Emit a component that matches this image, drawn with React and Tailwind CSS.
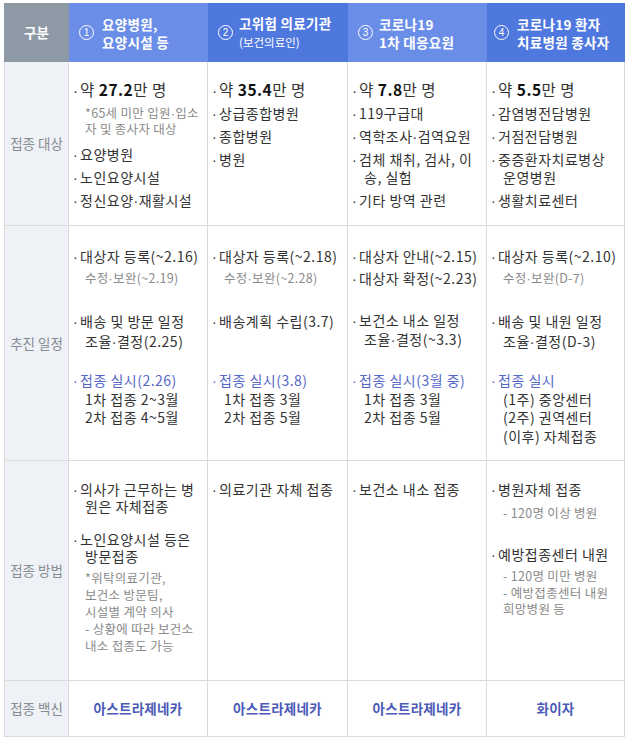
import React from 'react';

const line = 'border-r border-b border-[#dadada]';

// narrow middle dot (the CJK one is full width)
const D = () => <span className="font-['Liberation_Sans',sans-serif] leading-none">·</span>;

function Head({ n, bg, pad, gap, children }) {
  return (
    <div className={`flex items-center text-white ${bg} ${pad} ${gap}`}>
      <span className="flex h-[15px] w-[15px] shrink-0 items-center justify-center rounded-full border-[1.5px] border-white font-['Liberation_Sans',sans-serif] text-[10px] leading-none">
        {n}
      </span>
      <div className="whitespace-nowrap text-[13.5px] font-bold leading-[18px] tracking-[0.3px]">{children}</div>
    </div>
  );
}

function Label({ children }) {
  return (
    <div className={`flex items-center justify-center border-l bg-[#eef1f5] text-[13.5px] text-[#868c93] ${line}`}>
      {children}
    </div>
  );
}

function Item({ children, tone = 'text-[#333]', lead = 'leading-[18px]', className = '' }) {
  return (
    <p className={`whitespace-nowrap pl-[16px] indent-[-12px] text-[14px] tracking-[0.5px] ${tone} ${lead} ${className}`}>
      <span className="inline-block w-[7px] indent-0 font-['Liberation_Sans',sans-serif] leading-none">·</span>
      {children}
    </p>
  );
}

function Note({ children, lead = 'leading-[16px]', className = '' }) {
  return (
    <p className={`whitespace-nowrap pl-[16px] text-[12.5px] tracking-[0.3px] text-[#8a8a8a] ${lead} ${className}`}>
      {children}
    </p>
  );
}

function Big({ n }) {
  return (
    <Item lead="leading-[20px]" className="text-[15.5px]">
      약 <b className="font-bold text-[#111]">{n}</b>만 명
    </Item>
  );
}

function Plain({ children, lead = 'leading-[18.5px]' }) {
  return <p className={`whitespace-nowrap pl-[16px] text-[14px] tracking-[0.5px] text-[#333] ${lead}`}>{children}</p>;
}

const blue = 'text-[#5468c8]';

export default function App() {
  return (
    <div className="min-h-screen bg-white pl-[4px] pt-[3px] font-['Noto_Sans_CJK_KR','Noto_Sans',sans-serif] text-[13px] text-[#333]">
      <div className="grid w-[621px] grid-cols-[65px_139px_140px_139px_138px] grid-rows-[59px_164px_235px_220px_56px]">
        {/* header */}
        <div className="flex items-center justify-center bg-[#8d9aa5] text-[13.5px] font-bold text-white">구분</div>
        <Head n="1" bg="bg-[#6a8ee8]" pad="pl-[10px]" gap="gap-[8px]">
          요양병원,
          <br />
          요양시설 등
        </Head>
        <Head n="2" bg="bg-[#4f78df]" pad="pl-[10px]" gap="gap-[6px]">
          고위험 의료기관
          <br />
          <span className="text-[11.5px] font-normal tracking-normal">(보건의료인)</span>
        </Head>
        <Head n="3" bg="bg-[#6a8ee8]" pad="pl-[10px]" gap="gap-[6px]">
          코로나19
          <br />
          1차 대응요원
        </Head>
        <Head n="4" bg="bg-[#4f78df]" pad="pl-[7px]" gap="gap-[8px]">
          코로나19 환자
          <br />
          치료병원 종사자
        </Head>

        {/* 접종 대상 */}
        <Label>접종 대상</Label>
        <div className={`pt-[17px] ${line}`}>
          <Big n="27.2" />
          <Note className="mt-[6px]">
            *65세 미만 입원<D />입소
            <br />자 및 종사자 대상
          </Note>
          <Item className="mt-[8px]">요양병원</Item>
          <Item className="mt-[5px]">노인요양시설</Item>
          <Item className="mt-[5px]">
            정신요양<D />재활시설
          </Item>
        </div>
        <div className={`pt-[17px] ${line}`}>
          <Big n="35.4" />
          <Item className="mt-[5px]">상급종합병원</Item>
          <Item className="mt-[5px]">종합병원</Item>
          <Item className="mt-[5px]">병원</Item>
        </div>
        <div className={`pt-[17px] ${line}`}>
          <Big n="7.8" />
          <Item className="mt-[5px]">119구급대</Item>
          <Item className="mt-[5px]">
            역학조사<D />검역요원
          </Item>
          <Item className="mt-[5px]">
            검체 채취, 검사, 이
            <br />송, 실험
          </Item>
          <Item className="mt-[5px]">기타 방역 관련</Item>
        </div>
        <div className={`pt-[17px] ${line}`}>
          <Big n="5.5" />
          <Item className="mt-[5px]">감염병전담병원</Item>
          <Item className="mt-[5px]">거점전담병원</Item>
          <Item className="mt-[5px]">
            중증환자치료병상
            <br />
            운영병원
          </Item>
          <Item className="mt-[5px]">생활치료센터</Item>
        </div>

        {/* 추진 일정 */}
        <Label>추진 일정</Label>
        <div className={`pt-[20px] ${line}`}>
          <div className="h-[42px]">
            <Item lead="leading-[20px]">대상자 등록(~2.16)</Item>
            <Note lead="leading-[20px]" className="mt-[2px]">
              수정<D />보완(~2.19)
            </Note>
          </div>
          <div className="mt-[23px] h-[40px]">
            <Item lead="leading-[20px]">
              배송 및 방문 일정
              <br />
              조율<D />결정(2.25)
            </Item>
          </div>
          <div className="mt-[20px]">
            <Item tone={blue} lead="leading-[18.5px]">접종 실시(2.26)</Item>
            <Plain>1차 접종 2~3월</Plain>
            <Plain>2차 접종 4~5월</Plain>
          </div>
        </div>
        <div className={`pt-[20px] ${line}`}>
          <div className="h-[42px]">
            <Item lead="leading-[20px]">대상자 등록(~2.18)</Item>
            <Note lead="leading-[20px]" className="mt-[2px]">
              수정<D />보완(~2.28)
            </Note>
          </div>
          <div className="mt-[23px] h-[40px]">
            <Item lead="leading-[20px]">배송계획 수립(3.7)</Item>
          </div>
          <div className="mt-[20px]">
            <Item tone={blue} lead="leading-[18.5px]">접종 실시(3.8)</Item>
            <Plain>1차 접종 3월</Plain>
            <Plain>2차 접종 5월</Plain>
          </div>
        </div>
        <div className={`pt-[20px] ${line}`}>
          <div className="h-[42px]">
            <Item lead="leading-[20px]">대상자 안내(~2.15)</Item>
            <Item lead="leading-[20px]" className="mt-[2px]">대상자 확정(~2.23)</Item>
          </div>
          <div className="mt-[23px] h-[40px]">
            <Item lead="leading-[19px]">
              보건소 내소 일정
              <br />
              조율<D />결정(~3.3)
            </Item>
          </div>
          <div className="mt-[20px]">
            <Item tone={blue} lead="leading-[18.5px]">접종 실시(3월 중)</Item>
            <Plain>1차 접종 3월</Plain>
            <Plain>2차 접종 5월</Plain>
          </div>
        </div>
        <div className={`pt-[20px] ${line}`}>
          <div className="h-[42px]">
            <Item lead="leading-[20px]">대상자 등록(~2.10)</Item>
            <Note lead="leading-[20px]" className="mt-[2px]">
              수정<D />보완(D-7)
            </Note>
          </div>
          <div className="mt-[23px] h-[40px]">
            <Item lead="leading-[20px]">
              배송 및 내원 일정
              <br />
              조율<D />결정(D-3)
            </Item>
          </div>
          <div className="mt-[20px]">
            <Item tone={blue} lead="leading-[18.5px]">접종 실시</Item>
            <Plain>(1주) 중앙센터</Plain>
            <Plain>(2주) 권역센터</Plain>
            <Plain>(이후) 자체접종</Plain>
          </div>
        </div>

        {/* 접종 방법 */}
        <Label>접종 방법</Label>
        <div className={`pt-[20px] ${line}`}>
          <Item lead="leading-[17px]">
            의사가 근무하는 병
            <br />
            원은 자체접종
          </Item>
          <Item lead="leading-[17px]" className="mt-[16px]">
            노인요양시설 등은
            <br />
            방문접종
          </Item>
          <Note lead="leading-[17px]" className="mt-[4px]">
            *위탁의료기관,
            <br />
            보건소 방문팀,
            <br />
            시설별 계약 의사
            <br />- 상황에 따라 보건소
            <br />
            내소 접종도 가능
          </Note>
        </div>
        <div className={`pt-[20px] ${line}`}>
          <Item lead="leading-[17px]">의료기관 자체 접종</Item>
        </div>
        <div className={`pt-[20px] ${line}`}>
          <Item lead="leading-[17px]">보건소 내소 접종</Item>
        </div>
        <div className={`pt-[20px] ${line}`}>
          <Item lead="leading-[17px]">병원자체 접종</Item>
          <Note lead="leading-[17px]" className="mt-[6px]">- 120명 이상 병원</Note>
          <Item lead="leading-[17px]" className="mt-[25px]">예방접종센터 내원</Item>
          <Note lead="leading-[16.5px]" className="mt-[5px]">
            - 120명 미만 병원
            <br />- 예방접종센터 내원
            <br />
            희망병원 등
          </Note>
        </div>

        {/* 접종 백신 */}
        <Label>접종 백신</Label>
        {['아스트라제네카', '아스트라제네카', '아스트라제네카', '화이자'].map((v, i) => (
          <div key={i} className={`flex items-center justify-center text-[13.5px] font-bold tracking-[0.3px] text-[#4b5bb7] ${line}`}>
            {v}
          </div>
        ))}
      </div>
    </div>
  );
}
